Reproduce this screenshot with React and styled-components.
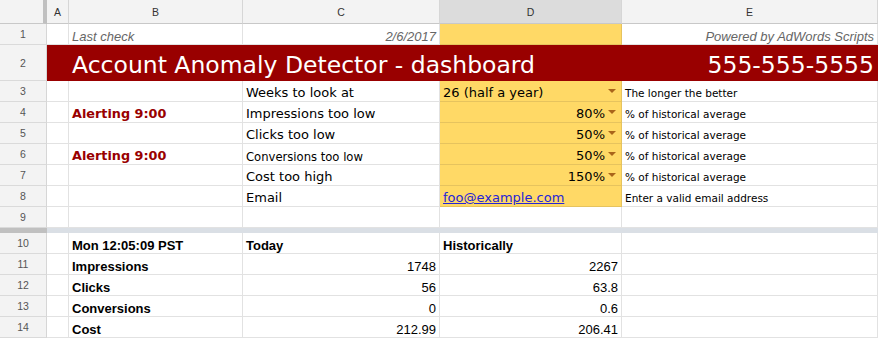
import React from "react";
import styled, { createGlobalStyle } from "styled-components";

const GlobalStyle = createGlobalStyle`
  body {
    margin: 0;
    background: #fff;
    overflow: hidden;
    font-family: "Liberation Sans", Arial, sans-serif;
  }
`;

const COLS = "47px 22px 174px 197px 182px 1fr";
const GRID = "#e2e2e2";
const YELLOW = "#ffd966";
const YELLOW_LINE = "#e6c35e";

const Sheet = styled.div`
  width: 878px;
  height: 338px;
  overflow: hidden;
  background: #fff;
`;

const Row = styled.div`
  display: grid;
  grid-template-columns: ${COLS};
  height: ${(p) => p.$h || 21}px;
`;

const Corner = styled.div`
  background: #f3f3f3;
  border-right: 4px solid #c0c0c0;
  border-bottom: 1px solid #c8c8c8;
`;

const ColHead = styled.div`
  display: flex;
  align-items: center;
  justify-content: center;
  background: ${(p) => (p.$active ? "#dcdcdc" : "#f3f3f3")};
  border-right: 1px solid #d6d6d6;
  border-bottom: 1px solid #c8c8c8;
  font: 10.5px "Liberation Sans", Arial, sans-serif;
  color: #333;
`;

const RowHead = styled.div`
  display: flex;
  align-items: center;
  justify-content: center;
  background: #f3f3f3;
  border-right: 1px solid #d6d6d6;
  border-bottom: 1px solid #dadada;
  font: 10.5px "Liberation Sans", Arial, sans-serif;
  color: #555;
`;

const Cell = styled.div`
  display: flex;
  align-items: flex-end;
  justify-content: ${(p) => (p.$right ? "flex-end" : "flex-start")};
  min-width: 0;
  overflow: hidden;
  white-space: nowrap;
  padding: 0 3px ${(p) => p.$pb ?? 1}px;
  background: ${(p) => p.$fill || "#fff"};
  border-right: 1px solid ${(p) => p.$line || GRID};
  border-bottom: 1px solid ${(p) => p.$line || GRID};
`;

const Banner = styled.div`
  grid-column: 2 / -1;
  display: flex;
  align-items: flex-end;
  justify-content: space-between;
  padding: 0 4px 2px 25px;
  background: #990000;
  color: #fff;
  font: 23.5px "DejaVu Sans", Verdana, sans-serif;
  white-space: nowrap;
`;

const Note = styled.span`
  font: italic 13px "Liberation Sans", Arial, sans-serif;
  color: #666;
`;

const Label = styled.span`
  font: ${(p) => p.$size || 13}px "DejaVu Sans", Verdana, sans-serif;
  color: #000;
`;

const Alert = styled.span`
  font: bold 12.8px "DejaVu Sans", Verdana, sans-serif;
  color: #990000;
`;

const Hint = styled.span`
  font: 10.5px "DejaVu Sans", Verdana, sans-serif;
  color: #000;
`;

const Mail = styled.a`
  font: 13px "DejaVu Sans", Verdana, sans-serif;
  color: #2424d8;
  text-decoration: underline;
`;

const Stat = styled.span`
  font: ${(p) => (p.$bold ? "bold " : "")}13px "Liberation Sans", Arial, sans-serif;
  color: #000;
`;

const Value = styled.span`
  flex: 1;
  text-align: ${(p) => (p.$left ? "left" : "right")};
  font: 13px "DejaVu Sans", Verdana, sans-serif;
  color: #000;
`;

const Arrow = styled.span`
  align-self: center;
  flex: none;
  width: 0;
  height: 0;
  margin: 1px 2px 0 3px;
  border-left: 4px solid transparent;
  border-right: 4px solid transparent;
  border-top: 4px solid #a9651a;
`;

const FreezeBar = styled.div`
  display: grid;
  grid-template-columns: 47px 1fr;
  height: 5px;
  background: #dadfe5;

  &::before {
    content: "";
    background: #c0c0c0;
  }
`;

const settings = [
  { n: 3, label: "Weeks to look at", value: "26 (half a year)", left: true, hint: "The longer the better" },
  { n: 4, alert: true, label: "Impressions too low", value: "80%", hint: "% of historical average" },
  { n: 5, label: "Clicks too low", value: "50%", hint: "% of historical average" },
  { n: 6, alert: true, label: "Conversions too low", small: true, value: "50%", hint: "% of historical average" },
  { n: 7, label: "Cost too high", value: "150%", hint: "% of historical average" },
];

const stats = [
  { n: 11, name: "Impressions", today: "1748", past: "2267" },
  { n: 12, name: "Clicks", today: "56", past: "63.8" },
  { n: 13, name: "Conversions", today: "0", past: "0.6" },
  { n: 14, name: "Cost", today: "212.99", past: "206.41" },
];

export default function App() {
  return (
    <Sheet>
      <GlobalStyle />
      <Row $h={24}>
        <Corner />
        <ColHead>A</ColHead>
        <ColHead>B</ColHead>
        <ColHead>C</ColHead>
        <ColHead $active>D</ColHead>
        <ColHead>E</ColHead>
      </Row>

      <Row>
        <RowHead>1</RowHead>
        <Cell />
        <Cell $pb={0}>
          <Note>Last check</Note>
        </Cell>
        <Cell $right $pb={0}>
          <Note>2/6/2017</Note>
        </Cell>
        <Cell $fill={YELLOW} $line={YELLOW_LINE} />
        <Cell $right $pb={0}>
          <Note>Powered by AdWords Scripts</Note>
        </Cell>
      </Row>

      <Row $h={36}>
        <RowHead>2</RowHead>
        <Banner>
          <span>Account Anomaly Detector - dashboard</span>
          <span>555-555-5555</span>
        </Banner>
      </Row>

      {settings.map((s) => (
        <Row key={s.n}>
          <RowHead>{s.n}</RowHead>
          <Cell />
          <Cell>{s.alert && <Alert>Alerting 9:00</Alert>}</Cell>
          <Cell $pb={s.small ? 0 : 1}>
            <Label $size={s.small ? 11.6 : 13}>{s.label}</Label>
          </Cell>
          <Cell $fill={YELLOW} $line={YELLOW_LINE}>
            <Value $left={s.left}>{s.value}</Value>
            <Arrow />
          </Cell>
          <Cell $pb={2}>
            <Hint>{s.hint}</Hint>
          </Cell>
        </Row>
      ))}

      <Row>
        <RowHead>8</RowHead>
        <Cell />
        <Cell />
        <Cell>
          <Label>Email</Label>
        </Cell>
        <Cell $fill={YELLOW} $line={YELLOW_LINE}>
          <Mail href="#">foo@example.com</Mail>
        </Cell>
        <Cell $pb={2}>
          <Hint>Enter a valid email address</Hint>
        </Cell>
      </Row>

      <Row>
        <RowHead>9</RowHead>
        <Cell />
        <Cell />
        <Cell />
        <Cell />
        <Cell />
      </Row>

      <FreezeBar />

      <Row>
        <RowHead>10</RowHead>
        <Cell />
        <Cell $pb={0}>
          <Stat $bold>Mon 12:05:09 PST</Stat>
        </Cell>
        <Cell $pb={0}>
          <Stat $bold>Today</Stat>
        </Cell>
        <Cell $pb={0}>
          <Stat $bold>Historically</Stat>
        </Cell>
        <Cell />
      </Row>

      {stats.map((s) => (
        <Row key={s.n}>
          <RowHead>{s.n}</RowHead>
          <Cell />
          <Cell $pb={0}>
            <Stat $bold>{s.name}</Stat>
          </Cell>
          <Cell $right $pb={0}>
            <Stat>{s.today}</Stat>
          </Cell>
          <Cell $right $pb={0}>
            <Stat>{s.past}</Stat>
          </Cell>
          <Cell />
        </Row>
      ))}
    </Sheet>
  );
}
